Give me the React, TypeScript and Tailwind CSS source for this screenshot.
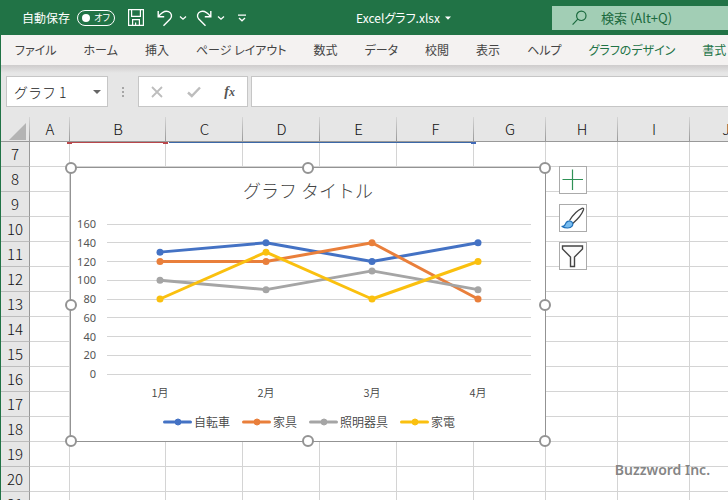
import { useState } from "react"

interface Series {
  name: string
  color: string
  values: number[]
}

const tabs = ["ファイル", "ホーム", "挿入", "ページ レイアウト", "数式", "データ", "校閲", "表示", "ヘルプ"]
const chartTabs = ["グラフのデザイン", "書式"]

const columns = ["A", "B", "C", "D", "E", "F", "G", "H", "I", "J"]
const columnWidths = ["w-10", "w-24", "w-[77px]", "w-[77px]", "w-[77px]", "w-[77px]", "w-18", "w-18", "w-18", "w-auto"]
const rows = Array.from({ length: 15 }, (_, i) => i + 7)

const months = ["1月", "2月", "3月", "4月"]
const series: Series[] = [
  { name: "自転車", color: "#4472c4", values: [130, 140, 120, 140] },
  { name: "家具", color: "#e97f3b", values: [120, 120, 140, 80] },
  { name: "照明器具", color: "#a5a5a5", values: [100, 90, 110, 90] },
  { name: "家電", color: "#fac00f", values: [80, 130, 80, 120] },
]
const ticks = [0, 20, 40, 60, 80, 100, 120, 140, 160]

const PLOT_LEFT = 36
const PLOT_WIDTH = 424
const PLOT_TOP = 8
const PLOT_HEIGHT = 150

const xOf = (i: number) => PLOT_LEFT + (PLOT_WIDTH / months.length) * (i + 0.5)
const yOf = (value: number) => PLOT_TOP + PLOT_HEIGHT * (1 - value / 160)

function Chevron() {
  return (
    <svg className="h-2 w-2" viewBox="0 0 8 8" fill="none" stroke="currentColor" strokeWidth="1.3">
      <path d="M1 2.5 4 5.2 7 2.5" />
    </svg>
  )
}

function TitleBar() {
  const [autoSave, setAutoSave] = useState(false)

  return (
    <header className="flex h-[35px] shrink-0 items-center justify-between bg-[#217346] pl-[22px] text-xs text-white">
      <div className="flex items-center pr-2">
        <label className="flex items-center gap-[7px] whitespace-nowrap">
          自動保存
          <input
            type="checkbox"
            className="peer sr-only"
            checked={autoSave}
            onChange={(e) => setAutoSave(e.target.checked)}
          />
          <span className="flex h-4 w-[38px] items-center justify-between rounded-full border border-white pr-1 pl-1 text-[9px] peer-checked:flex-row-reverse">
            <span className="h-2 w-2 rounded-full bg-white" />
            {autoSave ? "オン" : "オフ"}
          </span>
        </label>
        <button type="button" aria-label="上書き保存" className="ml-[13px]">
          <svg className="h-[17px] w-4" viewBox="0 0 16 17" fill="none" stroke="currentColor" strokeWidth="1.2">
            <path d="M.6.6H15.4V16.4H.6Z M3.6.6V7.4H12.4V.6 M4.6 16.4V10.6H11.4V16.4 M7.6 16.4V13.4" />
          </svg>
        </button>
        <button type="button" aria-label="元に戻す" className="ml-[13px] flex items-center gap-1">
          <svg className="h-[18px] w-[18px]" viewBox="0 0 18 18" fill="none" stroke="currentColor" strokeWidth="1.4">
            <path d="M1.2 2V7.8H7.2 M1.4 7.6C4 4.2 8 1.4 11.5 2.6c3.200 1.200 4 5 1.700 7.500L6.500 16.800" />
          </svg>
          <Chevron />
        </button>
        <button type="button" aria-label="やり直し" className="ml-2 flex items-center gap-1">
          <svg className="h-[18px] w-[18px]" viewBox="0 0 18 18" fill="none" stroke="currentColor" strokeWidth="1.4">
            <path d="M15.8 2V7.8H9.8 M15.6 7.6C13 4.2 9 1.4 5.5 2.6 2.300 3.800 1.500 7.600 3.800 10.100L10.500 16.800" />
          </svg>
          <Chevron />
        </button>
        <button type="button" aria-label="クイック アクセス ツール バーのユーザー設定" className="ml-3">
          <svg className="h-2 w-2.5" viewBox="0 0 10 8" fill="none" stroke="currentColor" strokeWidth="1.3">
            <path d="M1 1.2H9 M2 4 5 6.8 8 4" />
          </svg>
        </button>
      </div>
      <button type="button" className="flex items-center gap-[5px] whitespace-nowrap">
        Excelグラフ.xlsx
        <svg className="h-1 w-1.5" viewBox="0 0 6 4" fill="currentColor">
          <path d="M0 .5H6L3 3.8Z" />
        </svg>
      </button>
      <label className="flex h-6 w-44 items-center gap-3.5 bg-[#a2ceb5] pl-5 text-[#1b6a3e]">
        <svg className="h-4 w-[15px] shrink-0" viewBox="0 0 15 16" fill="none" stroke="currentColor" strokeWidth="1.2">
          <circle cx="9.3" cy="5.8" r="4.7" />
          <path d="M5.8 9.2.6 14.6" />
        </svg>
        <input
          type="text"
          aria-label="検索"
          placeholder="検索 (Alt+Q)"
          className="w-full min-w-0 bg-transparent text-[13px] outline-none placeholder:text-[#1b6a3e]"
        />
      </label>
    </header>
  )
}

function RibbonTabs() {
  return (
    <nav className="flex h-[30px] shrink-0 items-center gap-[3px] overflow-hidden border-l border-[#217346] bg-[#f4f2f1] pl-0.5 text-xs text-[#444]">
      {tabs.map((tab) => (
        <button key={tab} type="button" className="shrink-0 px-3 whitespace-nowrap">
          {tab}
        </button>
      ))}
      {chartTabs.map((tab) => (
        <button key={tab} type="button" className="shrink-0 px-3 whitespace-nowrap text-[#217346]">
          {tab}
        </button>
      ))}
    </nav>
  )
}

function FormulaBar() {
  const [name, setName] = useState("グラフ 1")
  const [formula, setFormula] = useState("")

  return (
    <div className="shrink-0 border-l border-[#217346]">
      <div className="h-2 bg-linear-to-b from-[#cecccc] to-[#e6e6e6]" />
      <div className="flex h-11 items-start pt-[3px] pl-[5px]">
        <div className="flex h-[31px] w-[102px] items-center border border-[#c6c6c6] bg-white pr-1.5 pl-[7px]">
          <input
            type="text"
            aria-label="名前ボックス"
            value={name}
            onChange={(e) => setName(e.target.value)}
            className="w-full min-w-0 text-sm font-light text-[#222] outline-none [font-feature-settings:normal]"
          />
          <button type="button" aria-label="名前の一覧">
            <svg className="h-1 w-2" viewBox="0 0 8 4" fill="#666">
              <path d="M0 0H8L4 4Z" />
            </svg>
          </button>
        </div>
        <div className="flex h-[31px] w-[30px] flex-col items-center justify-center gap-0.5">
          <span className="h-0.5 w-0.5 bg-[#a6a6a6]" />
          <span className="h-0.5 w-0.5 bg-[#a6a6a6]" />
          <span className="h-0.5 w-0.5 bg-[#a6a6a6]" />
        </div>
        <div className="flex h-[31px] w-[110px] items-center justify-between border border-[#c6c6c6] bg-white px-3">
          <button type="button" aria-label="キャンセル">
            <svg className="h-3 w-3" viewBox="0 0 12 12" fill="none" stroke="#bdbdbd" strokeWidth="1.8">
              <path d="M1 1 11 11 M11 1 1 11" />
            </svg>
          </button>
          <button type="button" aria-label="入力">
            <svg className="h-3 w-3.5" viewBox="0 0 14 12" fill="none" stroke="#bdbdbd" strokeWidth="2.4">
              <path d="M1 6.5 4.8 10 13 1.5" />
            </svg>
          </button>
          <button
            type="button"
            aria-label="関数の挿入"
            className="font-['Liberation_Serif',serif] text-sm leading-4 font-bold text-[#555] italic"
          >
            f<span className="text-xs">x</span>
          </button>
        </div>
        <input
          type="text"
          aria-label="数式バー"
          value={formula}
          onChange={(e) => setFormula(e.target.value)}
          className="ml-[3px] h-[31px] min-w-0 flex-1 border border-r-0 border-[#c6c6c6] bg-white px-2 text-sm outline-none"
        />
      </div>
    </div>
  )
}

function Grid() {
  return (
    <table className="w-full min-w-[761px] table-fixed border-separate border-spacing-0 text-[15px] leading-6 text-[#111]">
      <colgroup>
        <col className="w-[29px]" />
        {columns.map((column, i) => (
          <col key={column} className={columnWidths[i]} />
        ))}
      </colgroup>
      <thead>
        <tr className="bg-[#e6e6e6]">
          <td className="h-[25px] border-b border-[#999] bg-linear-to-b from-[#d6d6d6] to-[#999] bg-size-[1px_100%] bg-right bg-no-repeat p-0">
            <svg className="mt-1 ml-2 h-[17px] w-[17px]" viewBox="0 0 17 17" fill="#b4b4b4">
              <path d="M17 0V17H0Z" />
            </svg>
          </td>
          {columns.map((column) => (
            <th
              key={column}
              scope="col"
              className="h-[25px] border-b border-[#999] bg-linear-to-b from-[#d6d6d6] to-[#999] bg-size-[1px_100%] bg-right bg-no-repeat p-0 font-light"
            >
              {column}
            </th>
          ))}
        </tr>
      </thead>
      <tbody>
        {rows.map((row) => (
          <tr key={row}>
            <th scope="row" className="h-[25px] border-r border-b border-r-[#999] border-b-[#bdbdbd] bg-[#e6e6e6] p-0 font-light">
              {row}
            </th>
            {columns.map((column) => (
              <td key={column} className="border-r border-b border-[#d4d4d4] p-0" />
            ))}
          </tr>
        ))}
      </tbody>
    </table>
  )
}

function Plot() {
  return (
    <svg className="block h-[200px] w-full" viewBox="0 0 474 200">
      {ticks.map((tick) => (
        <g key={tick}>
          <line
            x1={PLOT_LEFT}
            x2={PLOT_LEFT + PLOT_WIDTH}
            y1={yOf(tick)}
            y2={yOf(tick)}
            stroke="#d4d4d4"
            shapeRendering="crispEdges"
          />
          <text x="25" y={yOf(tick) + 4} textAnchor="end" className="fill-[#555] font-['Noto_Sans',sans-serif] text-[11px]">
            {tick}
          </text>
        </g>
      ))}
      {months.map((month, i) => (
        <text key={month} x={xOf(i)} y="181" textAnchor="middle" className="fill-[#444] text-[11px] font-[350]">
          {month}
        </text>
      ))}
      {series.map(({ name, color, values }) => (
        <g key={name} fill={color}>
          <polyline
            points={values.map((value, i) => `${xOf(i)},${yOf(value)}`).join(" ")}
            fill="none"
            stroke={color}
            strokeWidth="3"
            strokeLinejoin="round"
          />
          {values.map((value, i) => (
            <circle key={i} cx={xOf(i)} cy={yOf(value)} r="3.5" />
          ))}
        </g>
      ))}
    </svg>
  )
}

const handles = [
  "left-0 top-0",
  "left-1/2 top-0",
  "left-full top-0",
  "left-0 top-1/2",
  "left-full top-1/2",
  "left-0 top-full",
  "left-1/2 top-full",
  "left-full top-full",
]

function Chart() {
  return (
    <section aria-label="グラフ 1" className="absolute top-[50px] left-[69px] w-[476px] border border-[#939393] bg-white">
      <h2 className="pt-2 text-center text-lg leading-7 font-light text-[#444] [font-feature-settings:normal]">
        グラフ タイトル
      </h2>
      <div className="pt-3">
        <Plot />
      </div>
      <ul className="flex h-[25px] items-start justify-center gap-3 pl-0.5 text-xs leading-3 font-[350] text-[#444]">
        {series.map(({ name, color }) => (
          <li key={name} className="flex items-center gap-0.5">
            <svg className="h-2 w-[29px]" viewBox="0 0 29 8" fill={color} stroke={color}>
              <path d="M1.5 4H27.5" strokeWidth="3" strokeLinecap="round" />
              <circle cx="15" cy="4" r="3" />
            </svg>
            {name}
          </li>
        ))}
      </ul>

      {handles.map((place) => (
        <span
          key={place}
          className={`absolute h-3 w-3 -translate-x-1/2 -translate-y-1/2 rounded-full border-2 border-[#939393] bg-white ${place}`}
        />
      ))}

      {/* Chart tools floating beside the frame */}
      <div className="absolute -top-0.5 left-[488px] flex flex-col gap-2.5">
        <button type="button" aria-label="グラフ要素" className="h-7 w-7 border border-[#ababab] bg-white">
          <svg viewBox="0 0 26 26" fill="none" stroke="#2f9156" strokeWidth="1.2">
            <path d="M12.5 2.5V23 M2.5 12.5H23" />
          </svg>
        </button>
        <button type="button" aria-label="グラフ スタイル" className="h-7 w-7 border border-[#ababab] bg-white">
          <svg viewBox="0 0 26 26" strokeLinejoin="round">
            <path
              d="M9.5 15.5C12.5 10.5 18 5 22 3.3c1.4-.5 1.900.2 1.500 1.500C22 9 17.500 14.500 12.700 18.500"
              fill="#fff"
              stroke="#444"
              strokeWidth="1.3"
            />
            <path
              d="M2 21.4c2.200.3 2.900-.9 3.600-2.800.8-2 3-3.200 5.200-2.300 2.100.9 2.600 3.100 1.300 4.800C10.300 23.400 5.500 23.700 2 21.400Z"
              fill="#79bdf0"
              stroke="#1e6fb8"
              strokeWidth="1.2"
            />
          </svg>
        </button>
        <button type="button" aria-label="グラフ フィルター" className="h-7 w-7 border border-[#ababab] bg-white">
          <svg viewBox="0 0 26 26" fill="#fafafa" stroke="#444" strokeWidth="1.4">
            <path d="M2.5 3H22.5V6L14.5 14V23.5H10.500V14L2.500 6Z" />
          </svg>
        </button>
      </div>
    </section>
  )
}

export default function App() {
  return (
    <div className="flex h-screen flex-col overflow-hidden bg-[#e6e6e6] font-['Noto_Sans_CJK_JP',sans-serif] [font-feature-settings:'palt']">
      <TitleBar />
      <RibbonTabs />
      <FormulaBar />
      <main className="relative min-h-0 flex-1 overflow-hidden border-l border-[#217346] bg-white">
        <Grid />
        {/* Lower edge of the highlighted source range */}
        <div className="absolute top-[25px] left-[66px] flex items-start">
          <span className="h-0.5 w-[5px] bg-[#b8474b]" />
          <span className="h-px w-[91px] bg-[#b8474b]" />
          <span className="h-0.5 w-[5px] bg-[#b8474b]" />
          <span className="ml-px h-px w-[302px] bg-[#3c68a8]" />
          <span className="h-0.5 w-[5px] bg-[#4069b8]" />
        </div>
        <Chart />
        <p className="absolute right-[18px] bottom-5 font-['Noto_Sans',sans-serif] text-sm leading-5 font-semibold text-[#858585]">
          Buzzword Inc.
        </p>
      </main>
    </div>
  )
}
